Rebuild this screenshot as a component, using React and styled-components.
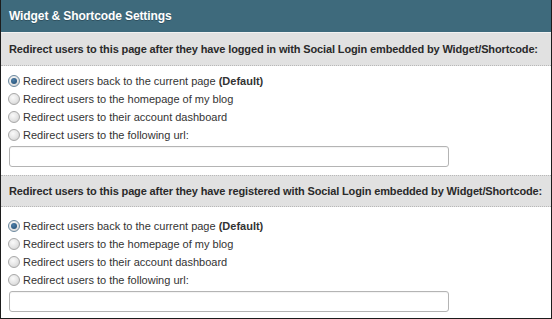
import React from "react";
import styled, { createGlobalStyle } from "styled-components";

const Global = createGlobalStyle`
  html, body { margin: 0; padding: 0; background: #fff; }
  body { font-family: "Liberation Sans", Arial, sans-serif; }
`;

const Frame = styled.div`
  width: 552px;
  height: 319px;
  box-sizing: border-box;
  border: 1px solid #1c1c1c;
  border-top: none;
  overflow: hidden;
  background: #fff;
  display: flex;
  flex-direction: column;
`;

const Header = styled.div`
  height: 32px;
  flex: none;
  background: #3e6a7c;
  border-bottom: 1px solid #f2f2f2;
  display: flex;
  align-items: center;
  padding: 0 8px;
  color: #fff;
  font-weight: bold;
  font-size: 12px;
  letter-spacing: -0.1px;
  text-shadow: 0 1px 0 rgba(0, 0, 0, 0.25);
`;

const Band = styled.div`
  height: ${(p) => (p.$first ? 32 : 30)}px;
  flex: none;
  background: #e1e1e1;
  border-top: ${(p) => (p.$first ? "none" : "1px dotted #b8b8b8")};
  border-bottom: 1px dotted #b8b8b8;
  display: flex;
  align-items: center;
  padding: 0 8px;
  font-size: 11px;
  letter-spacing: -0.13px;
  white-space: nowrap;
  font-weight: bold;
  color: #2a2a2a;
`;

const Options = styled.div`
  display: flex;
  flex-direction: column;
  padding: ${(p) => (p.$first ? "6px" : "10px")} 8px 8px;
`;

const Option = styled.label`
  height: 18px;
  display: flex;
  align-items: center;
  gap: 3px;
  font-size: 11px;
  color: #333;
`;

const Radio = styled.span`
  width: 12px;
  height: 12px;
  margin-left: -1px;
  border-radius: 50%;
  box-sizing: border-box;
  border: 1px solid ${(p) => (p.$checked ? "#6d8aa0" : "#a8a8a8")};
  background: radial-gradient(circle at 40% 35%, #fafafa 0%, #e4e4e4 55%, #c9c9c9 100%);
  display: flex;
  align-items: center;
  justify-content: center;
  flex: none;
  &::after {
    content: "";
    display: ${(p) => (p.$checked ? "block" : "none")};
    width: 6px;
    height: 6px;
    border-radius: 50%;
    background: radial-gradient(circle at 40% 35%, #4d7ea8 0%, #1e4a70 100%);
  }
`;

const UrlInput = styled.div`
  margin-top: 2px;
  width: 440px;
  height: 21px;
  box-sizing: border-box;
  border: 1px solid #b4b4b4;
  border-radius: 3px;
  background: #fff;
  box-shadow: inset 0 1px 1px rgba(0, 0, 0, 0.05);
`;

const options = [
  ["Redirect users back to the current page ", "(Default)"],
  ["Redirect users to the homepage of my blog"],
  ["Redirect users to their account dashboard"],
  ["Redirect users to the following url:"],
];

function Section({ title, first }) {
  return (
    <>
      <Band $first={first}>{title}</Band>
      <Options $first={first}>
        {options.map(([text, bold], i) => (
          <Option key={i}>
            <Radio $checked={i === 0} />
            <span>
              {text}
              {bold && <b>{bold}</b>}
            </span>
          </Option>
        ))}
        <UrlInput />
      </Options>
    </>
  );
}

export default function App() {
  return (
    <>
      <Global />
      <Frame>
        <Header>Widget &amp; Shortcode Settings</Header>
        <Section
          first
          title="Redirect users to this page after they have logged in with Social Login embedded by Widget/Shortcode:"
        />
        <Section title="Redirect users to this page after they have registered with Social Login embedded by Widget/Shortcode:" />
      </Frame>
    </>
  );
}
